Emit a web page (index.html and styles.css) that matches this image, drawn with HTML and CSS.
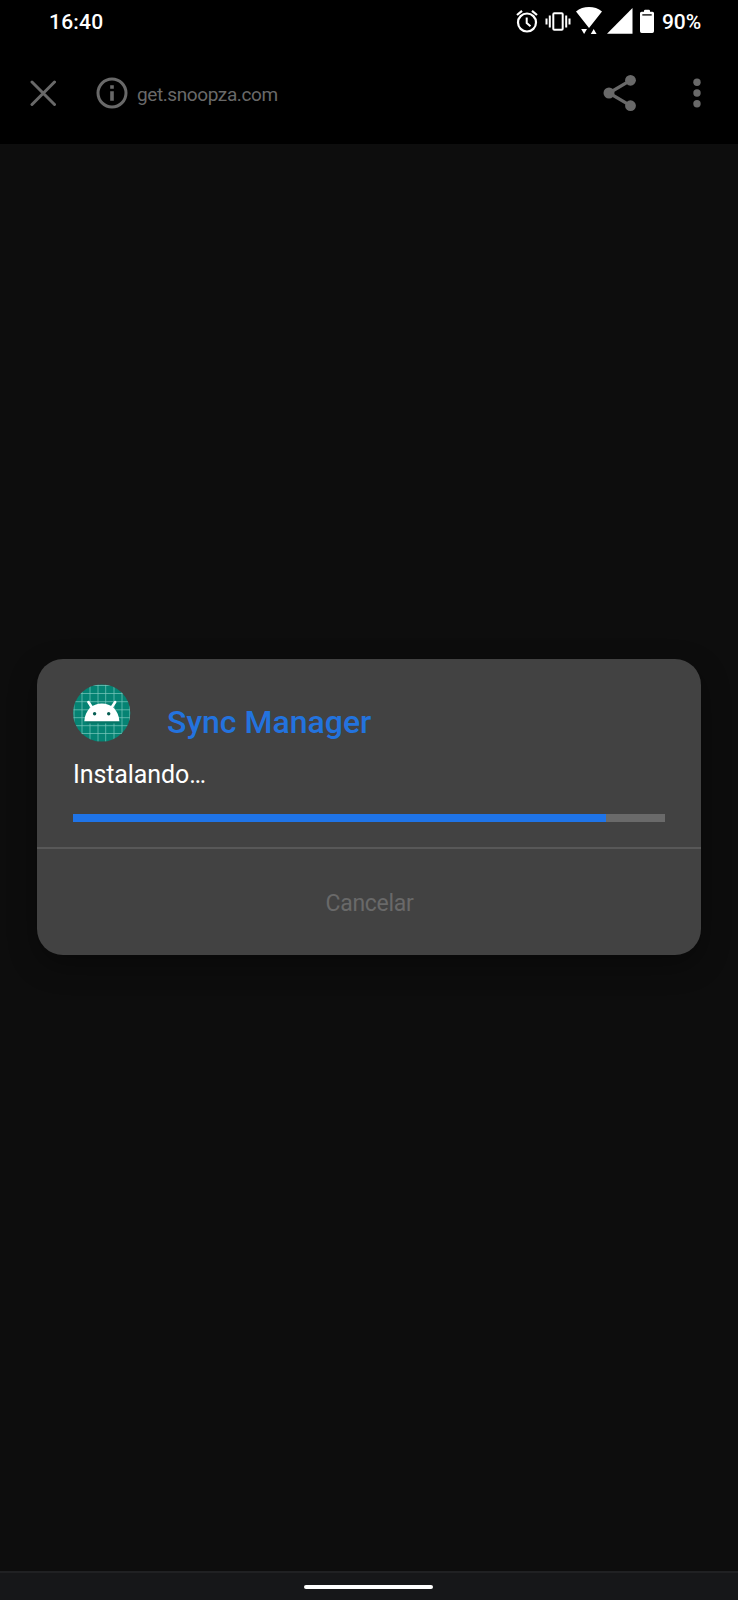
FILE: index.html
```html
<!DOCTYPE html>
<html lang="es">
<head>
<meta charset="utf-8">
<title>get.snoopza.com</title>
<link rel="stylesheet" href="styles.css">
</head>
<body>
<div class="screen">
  <header class="top">
    <div class="status">
      <span class="clock">16:40</span>
      <div class="status-icons">
        <svg class="alarm" width="22" height="44" viewBox="0 0 22 44" fill="none" stroke="#fff"><circle cx="11" cy="22.500" r="9" stroke-width="2.200"/><path d="M10.700 17.500v5.500l3.800 3.200" stroke-width="2"/><path d="M1 15l5-4.200M21 15l-5-4.200" stroke-width="2.200"/></svg>
        <svg class="vibrate" width="26" height="44" viewBox="0 0 26 44" fill="none" stroke="#fff" stroke-width="2"><rect x="8.300" y="13.300" width="9.400" height="16.400" rx="1"/><path d="M4.800 15.500v12M21.200 15.500v12M1.500 18.500v6M24.500 18.500v6"/></svg>
        <svg class="wifi" width="26" height="44" viewBox="0 0 26 44" fill="#fff"><path d="M0 11.500C7 5.600 19 5.600 26 11.500L13 28zM5.200 29h5.800l-2.900 5zM14.800 34h5.800l-2.900-5z"/></svg>
        <svg class="signal" width="26" height="44" viewBox="0 0 26 44" fill="#fff"><path d="M25.500 8v25.700H0z"/></svg>
        <svg class="battery" width="14" height="44" viewBox="0 0 14 44"><path fill="#fff" d="M4 11q0-1.200 1.200-1.200h3.600Q10 9.800 10 11v.7h2.500q1.500 0 1.500 1.500v18q0 1.700-1.700 1.700H1.700Q0 32.900 0 31.200v-18q0-1.500 1.500-1.500H4z"/><path d="M2.300 14.900h9.400" stroke="#000" stroke-width="1.300"/></svg>
      </div>
      <span class="percent">90%</span>
    </div>
    <nav class="toolbar">
      <svg class="close" width="26" height="26" viewBox="0 0 26 26" fill="none" stroke="#696969" stroke-width="3"><path d="M2 2l22.500 22.500M24.500 2L2 24.500" stroke-linecap="round"/></svg>
      <svg class="info" width="32" height="32" viewBox="0 0 32 32" fill="none" stroke="#696969"><circle cx="16" cy="16" r="14" stroke-width="3"/><path d="M16 8.300v3.500M16 14.300v9.400" stroke-width="3.600"/></svg>
      <span class="url">get.snoopza.com</span>
      <svg class="share" width="34" height="38" viewBox="0 0 34 38" fill="#696969"><path d="M27.500 6.300L6 19l21.500 12.700" fill="none" stroke="#696969" stroke-width="3.300"/><circle cx="27.500" cy="6.300" r="5.400"/><circle cx="6" cy="19" r="5.500"/><circle cx="27.500" cy="31.700" r="5.400"/></svg>
      <svg class="more" width="8" height="30" viewBox="0 0 8 30" fill="#696969"><circle cx="4" cy="4.200" r="3.700"/><circle cx="4" cy="15" r="3.700"/><circle cx="4" cy="25.800" r="3.700"/></svg>
    </nav>
  </header>
  <main class="content">
    <section class="dialog">
      <div class="body">
        <div class="heading">
          <svg class="app-icon" width="58" height="58" viewBox="0 0 58 58">
            <defs><clipPath id="disc"><circle cx="28.700" cy="29" r="28.600"/></clipPath></defs>
            <g clip-path="url(#disc)">
              <path fill="#058373" d="M0 0h58v58H0z"/>
              <path d="M1 0v58M9 0v58M17 0v58M25 0v58M32.700 0v58M41 0v58M49 0v58M56.800 0v58M0 1.500h58M0 9.500h58M0 17.700h58M0 25.800h58M0 33.700h58M0 41.700h58M0 49.500h58" stroke="#7cc9bd" stroke-width=".7" fill="none"/>
              <path fill="#067566" d="M12 37h33.500l2 2.500H14z"/>
            </g>
            <path d="M20 25l-4.600-7M37.600 25l4.600-7" stroke="#fff" stroke-width="2.600" stroke-linecap="round"/>
            <path fill="#fff" d="M11.300 37.300C12 26 19.500 19.600 28.800 19.600S45.700 26 46.400 37.300z"/>
            <circle cx="21.600" cy="29.700" r="1.700" fill="#075e53"/><circle cx="35.700" cy="29.700" r="1.700" fill="#075e53"/>
          </svg>
          <h1 class="title">Sync Manager</h1>
        </div>
        <p class="message">Instalando…</p>
        <div class="progress"><div class="fill" style="width:90.1%"></div></div>
      </div>
      <button class="cancel" disabled>Cancelar</button>
    </section>
  </main>
  <footer class="gesture"><div class="handle"></div></footer>
</div>
</body>
</html>
```
FILE: styles.css
```css
* { box-sizing: border-box; }
body { margin: 0; background: #0d0d0d; font-family: Roboto, sans-serif; }
svg { display: block; flex: none; }
.screen { width: 738px; height: 1600px; display: flex; flex-direction: column; }
.top { height: 144px; background: #000; }
.status { height: 44px; display: flex; align-items: center; padding: 0 37px 0 49px; color: #fff; font-size: 21px; font-weight: 500; line-height: 44px; }
.clock { margin-right: auto; letter-spacing: .2px; }
.status-icons { display: flex; }
.vibrate { margin-left: 7px; }
.wifi { margin-left: 5px; }
.signal { margin-left: 5px; }
.battery { margin-left: 7px; }
.percent { width: 39px; margin-left: 8px; font-size: 21px; letter-spacing: -.1px; white-space: nowrap; }
.toolbar { height: 98px; display: flex; align-items: center; padding: 0 37px 0 30px; color: #696969; }
.info { margin-left: 40px; }
.url { margin: 4px auto 0 9px; font-size: 19px; letter-spacing: -.4px; line-height: 24px; }
.more { margin-left: 56px; }
.content { flex: 1; padding: 515px 37px 0; }
.dialog { height: 296px; border-radius: 26px; background: #424242; box-shadow: 0 10px 28px rgba(0, 0, 0, .35); overflow: hidden; }
.body { height: 188px; padding: 25px 36px 0; }
.heading { display: flex; height: 58px; }
.title { margin: 19px 0 0 36px; font-size: 32px; font-weight: 500; line-height: 38px; color: #2373de; white-space: nowrap; }
.message { margin: 18px 0 0; font-size: 25px; letter-spacing: -.1px; line-height: 30px; color: #fff; }
.progress { height: 8px; margin-top: 24px; background: #6a6a6a; }
.fill { height: 8px; background: #1f74e8; }
.cancel { display: block; width: 100%; height: 108px; border: 0; border-top: 2px solid #585858; padding: 4px 0 0 1px; background: none; color: #696969; font: 400 23px/28px Roboto, sans-serif; letter-spacing: -.3px; }
.gesture { height: 29px; border-top: 2px solid #202123; background: #161719; padding-top: 12px; }
.handle { width: 129px; height: 4px; margin: 0 0 0 304px; border-radius: 2px; background: #fff; }
```
